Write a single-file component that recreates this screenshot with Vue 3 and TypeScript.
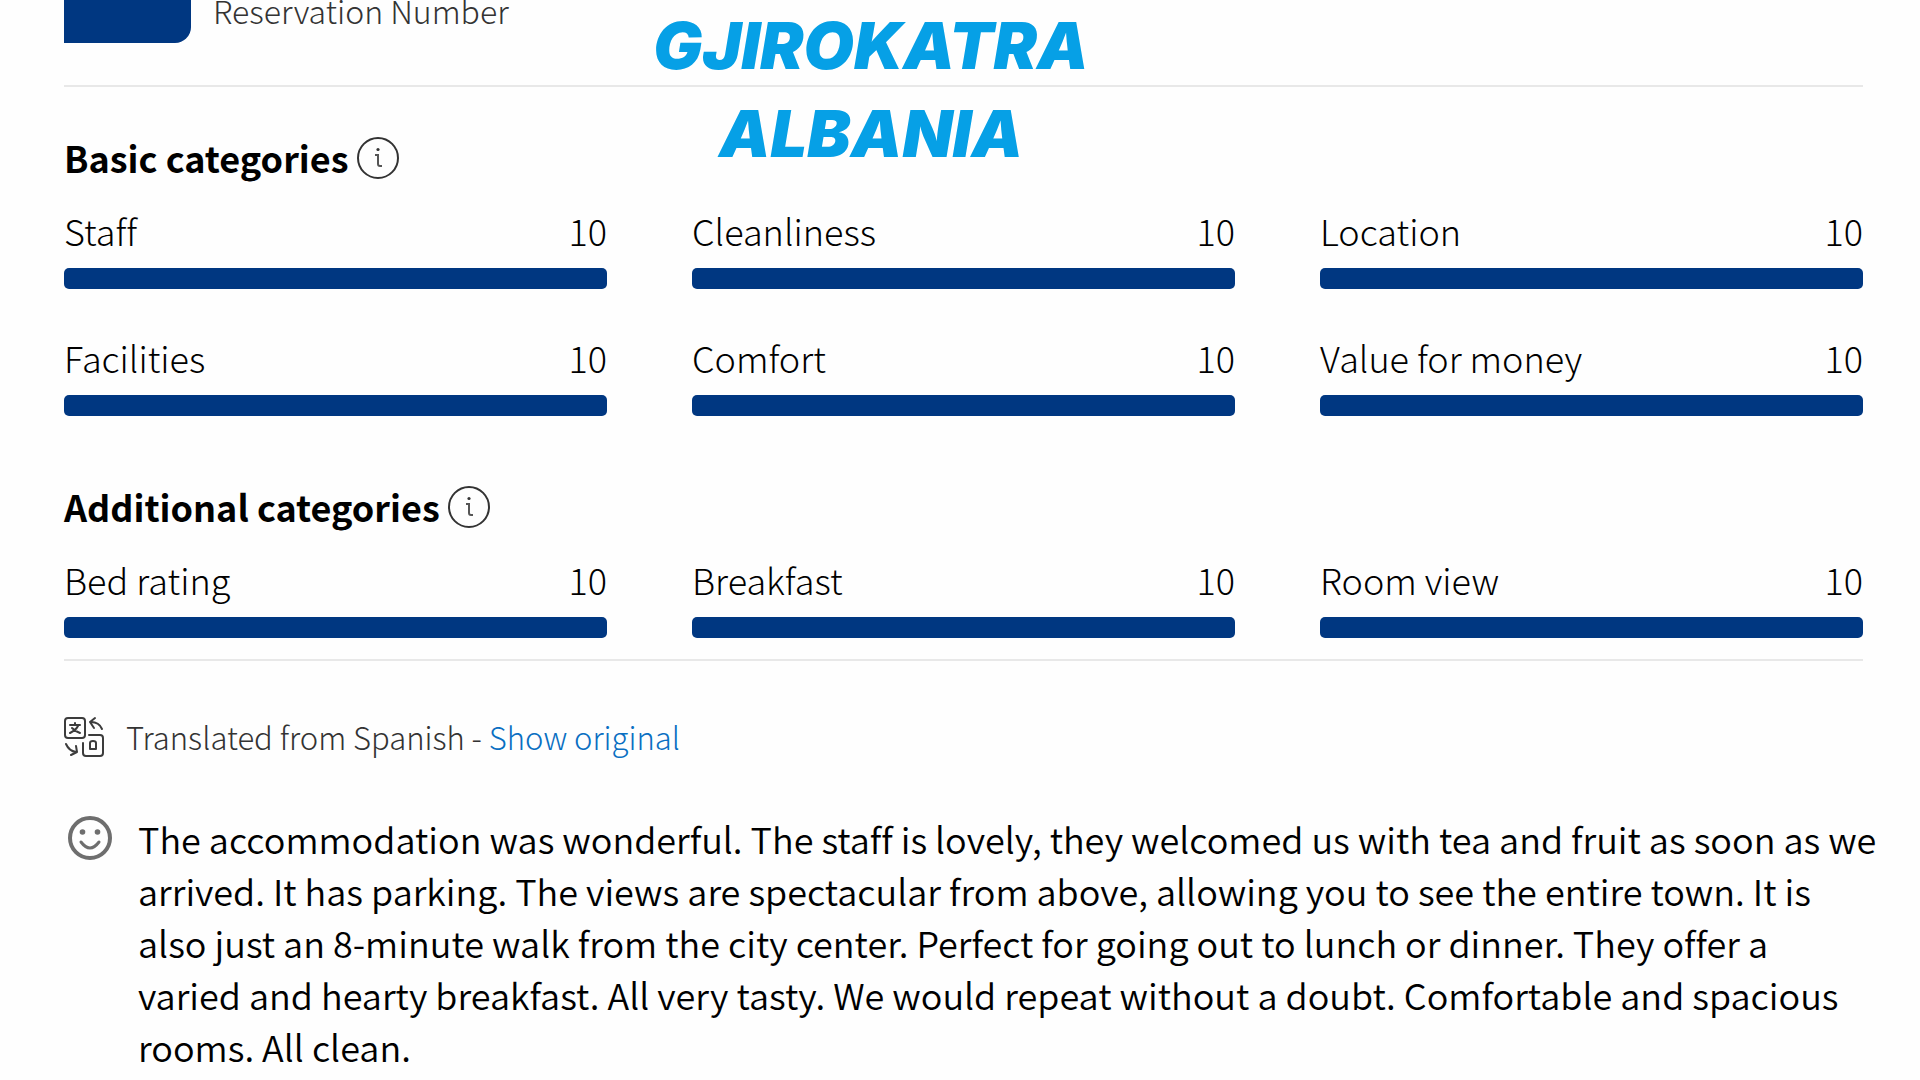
<script setup lang="ts">
interface Score {
  label: string
  value: number
}

interface ScoreGroup {
  id: string
  title: string
  scores: Score[]
}

const groups: ScoreGroup[] = [
  {
    id: 'basic',
    title: 'Basic categories',
    scores: [
      { label: 'Staff', value: 10 },
      { label: 'Cleanliness', value: 10 },
      { label: 'Location', value: 10 },
      { label: 'Facilities', value: 10 },
      { label: 'Comfort', value: 10 },
      { label: 'Value for money', value: 10 },
    ],
  },
  {
    id: 'additional',
    title: 'Additional categories',
    scores: [
      { label: 'Bed rating', value: 10 },
      { label: 'Breakfast', value: 10 },
      { label: 'Room view', value: 10 },
    ],
  },
]

const review = [
  'The accommodation was wonderful. The staff is lovely, they welcomed us with tea and fruit as soon as we',
  'arrived. It has parking. The views are spectacular from above, allowing you to see the entire town. It is',
  'also just an 8-minute walk from the city center. Perfect for going out to lunch or dinner. They offer a',
  'varied and hearty breakfast. All very tasty. We would repeat without a doubt. Comfortable and spacious',
  'rooms. All clean.',
].join('\n')
</script>

<template>
  <main class="page">
    <div class="place">
      <span>GJIROKATRA</span>
      <span>ALBANIA</span>
    </div>

    <header class="reservation">
      <div class="badge"></div>
      <span class="reservation-label">Reservation Number</span>
    </header>

    <div class="ratings">
      <section v-for="group in groups" :key="group.id" class="group">
        <div class="group-head">
          <h2>{{ group.title }}</h2>
          <button type="button" class="info" :aria-label="'About ' + group.title">
            <svg viewBox="0 0 42 42" fill="none" stroke="#333" aria-hidden="true">
              <circle cx="21" cy="21" r="20" stroke-width="2" />
              <path d="M18 18h3v9q0 2 2 2h2" stroke-width="2" stroke="#555" />
              <circle cx="21" cy="12.5" r="1.6" fill="#333" stroke="none" />
            </svg>
          </button>
        </div>
        <div class="grid">
          <div v-for="score in group.scores" :key="score.label" class="score">
            <div class="score-head">
              <span>{{ score.label }}</span>
              <span>{{ score.value }}</span>
            </div>
            <div
              class="track"
              role="meter"
              :aria-label="score.label"
              aria-valuemin="0"
              aria-valuemax="10"
              :aria-valuenow="score.value"
            >
              <div class="fill" :style="{ width: score.value * 10 + '%' }"></div>
            </div>
          </div>
        </div>
      </section>
    </div>

    <p class="translated">
      <svg
        class="translate-icon"
        viewBox="0 0 40 42"
        fill="none"
        stroke="#3c3c3c"
        stroke-width="2"
        stroke-linecap="round"
        stroke-linejoin="round"
        aria-hidden="true"
      >
        <path d="M4 2h14q3 0 3 3v14q0 3-3 3H4q-3 0-3-3V5q0-3 3-3z" />
        <path d="M6 9h10M11 7v2M14 10q-2 4-8 7M8 12q3 3 8 5" />
        <path d="M25 19h11q3 0 3 3v15q0 3-3 3H22q-3 0-3-3V27" />
        <path d="M26 33v-6q0-2 3-2t3 2v6zM31 33h1" />
        <path d="M38 13q-3-7-11-7M31 2l-5 4 4 6" />
        <path d="M2 28q3 7 10 8M12 30l1 6-6 3" />
      </svg>
      <span>Translated from Spanish - <a href="#original">Show original</a></span>
    </p>

    <div class="review">
      <svg class="smile" viewBox="0 0 44 44" fill="none" stroke="#6e6e6e" aria-hidden="true">
        <circle cx="22" cy="22" r="20" stroke-width="4" />
        <circle cx="14.5" cy="16" r="2.8" fill="#6e6e6e" stroke="none" />
        <circle cx="29.5" cy="16" r="2.8" fill="#6e6e6e" stroke="none" />
        <path d="M13 26q9 12 18 0" stroke-width="3" stroke-linecap="round" />
      </svg>
      <p>{{ review }}</p>
    </div>
  </main>
</template>

<style>
body {
  margin: 0;
  background: #fefefe;
}
</style>

<style scoped>
.page {
  position: relative;
  padding: 0 57px 0 64px;
  font-family: 'Noto Sans CJK SC', 'Noto Sans', sans-serif;
  font-size: 36px;
  font-weight: 300;
  font-variant-ligatures: none;
  line-height: 52px;
  color: #000;
}

.place {
  position: absolute;
  top: 2px;
  left: 0;
  right: 178px;
  display: flex;
  flex-direction: column;
  align-items: center;
  font-family: Inter, 'Liberation Sans', sans-serif;
  font-size: 65px;
  font-weight: 900;
  font-style: italic;
  line-height: 88px;
  color: #06a0e6;
  pointer-events: none;
}

.reservation {
  display: flex;
  gap: 22px;
  height: 85px;
  border-bottom: 2px solid #e8e8e8;
}

.badge {
  width: 127px;
  height: 43px;
  border-radius: 0 0 16px 0;
  background: #003781;
}

.reservation-label {
  font-size: 32px;
  line-height: 20px;
  color: #333;
}

.ratings {
  display: flex;
  flex-direction: column;
  gap: 70px;
  padding: 50px 0 21px;
  border-bottom: 2px solid #e8e8e8;
}

.group-head {
  display: flex;
  align-items: flex-start;
  gap: 8px;
  height: 42px;
}

h2 {
  margin: 0;
  font-size: 36px;
  font-weight: 700;
  line-height: 40px;
}

.info {
  width: 42px;
  height: 42px;
  padding: 0;
  border: 0;
  background: none;
  cursor: pointer;
}

.info svg {
  display: block;
}

.grid {
  display: grid;
  grid-template-columns: repeat(3, 1fr);
  column-gap: 85px;
  row-gap: 38px;
  margin-top: 21px;
}

.score-head {
  display: flex;
  justify-content: space-between;
  height: 68px;
  line-height: 60px;
}

.track {
  height: 21px;
  border-radius: 5px;
  background: #e6eaf2;
  overflow: hidden;
}

.fill {
  height: 100%;
  background: #003781;
}

.translated {
  display: flex;
  align-items: center;
  gap: 22px;
  margin: 50px 0 0;
  font-size: 31px;
  color: #333;
}

.translate-icon {
  width: 40px;
  height: 42px;
}

.translated a {
  color: #0a6fc2;
  text-decoration: none;
}

.review {
  display: flex;
  gap: 26px;
  margin: 49px -24px 0 0;
  padding-left: 4px;
}

.smile {
  flex: none;
  width: 44px;
  height: 44px;
  margin-top: 4px;
}

.review p {
  margin: 0;
  font-weight: 350;
  white-space: pre-line;
}
</style>
